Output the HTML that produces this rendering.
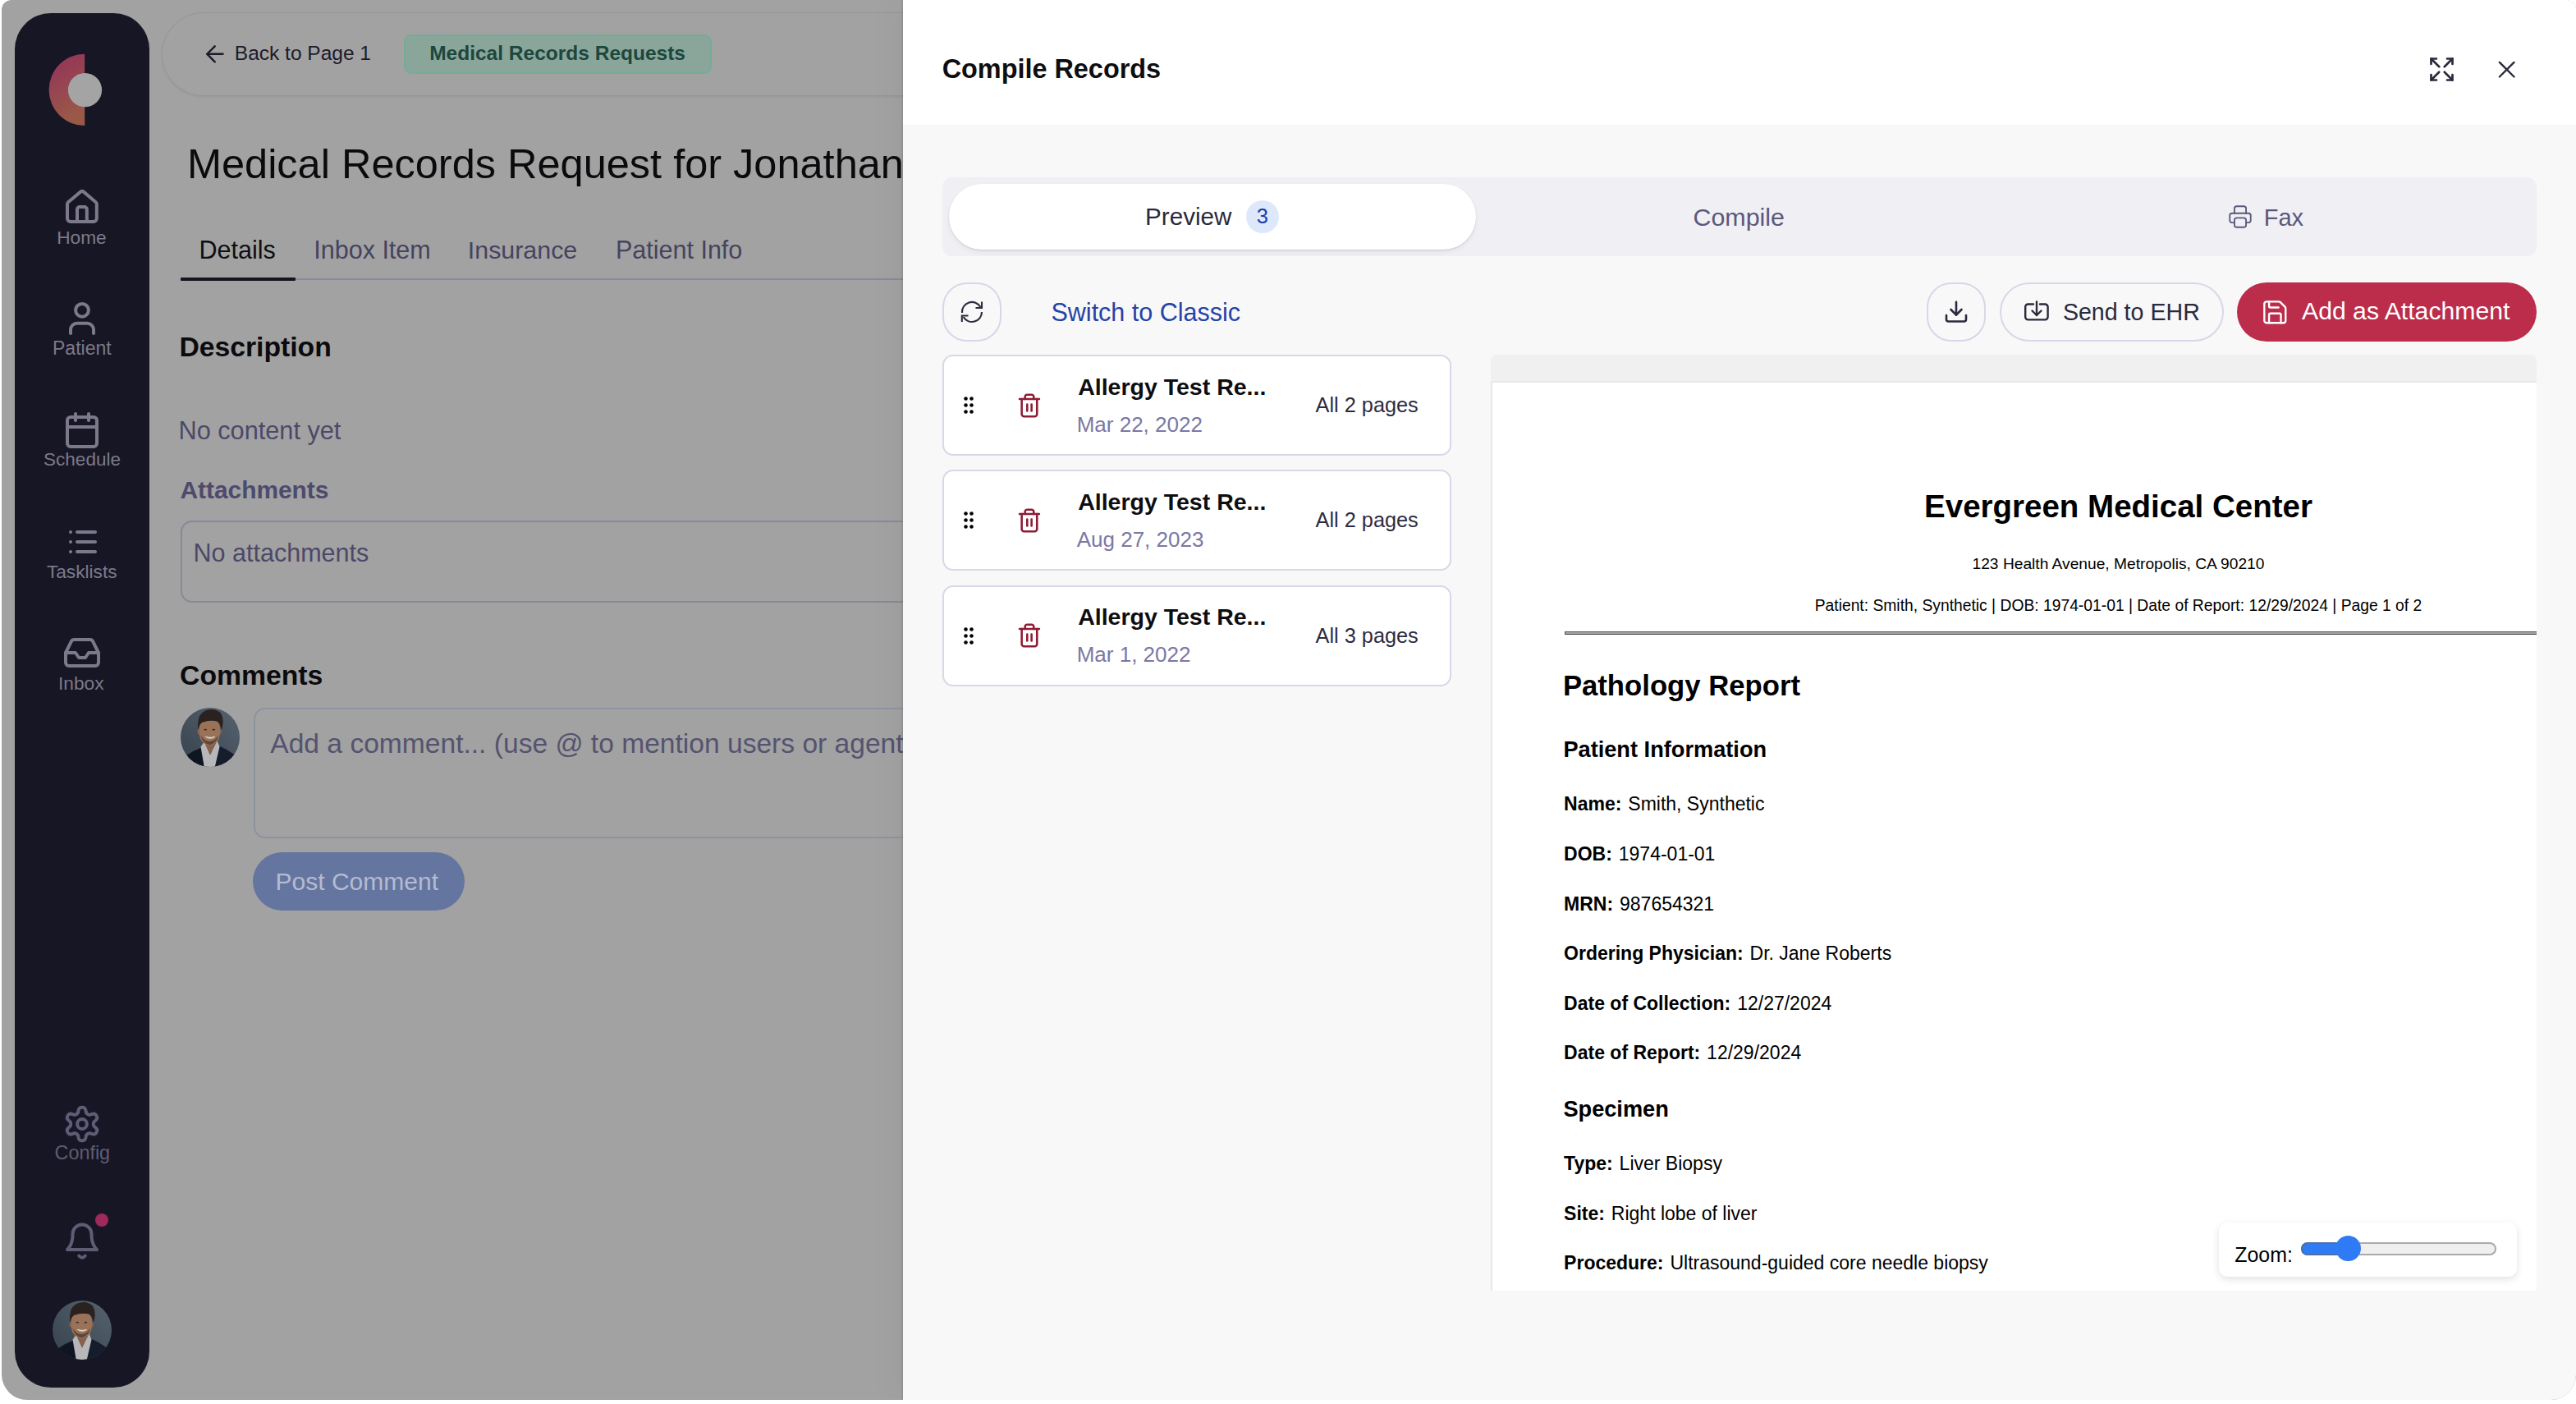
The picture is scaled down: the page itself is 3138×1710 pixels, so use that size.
<!DOCTYPE html>
<html><head><meta charset="utf-8"><style>
html,body{margin:0;padding:0;width:3138px;height:1710px;overflow:hidden;background:#fff;font-family:"Liberation Sans",sans-serif}
.win{position:absolute;left:2px;top:0;width:3136px;height:1705px;border-radius:12px 12px 31px 31px;overflow:hidden;background:#a2a2a2}
.page{position:absolute;left:-2px;top:0;width:1100px;height:1705px;overflow:hidden}
.drawer{position:absolute;left:1098px;top:0;width:2038px;height:1705px;background:#f8f8f8;box-shadow:-1px 0 2px rgba(0,0,0,0.15),-8px 0 40px rgba(0,0,0,0.04)}
.t{position:absolute;white-space:nowrap;line-height:1}
.b{position:absolute;box-sizing:border-box}
svg.b{overflow:visible}
</style></head><body>
<div class="win">
<div class="page">
<div class="b" style="left:18px;top:16px;width:164px;height:1674px;background:#171624;border-radius:44px"></div>
<svg class="b" style="left:56px;top:62px;width:96px;height:96px" viewBox="56 62 96 96"><defs><linearGradient id="lg" x1="0" y1="0" x2="0.3" y2="1"><stop offset="0" stop-color="#93305b"/><stop offset="1" stop-color="#9a5947"/></linearGradient></defs><path d="M103.2 65.8 A43.6 43.6 0 0 0 103.2 153 Z" fill="url(#lg)"/><circle cx="103.5" cy="109.6" r="20.6" fill="#a4a4a4"/></svg>
<svg class="b" style="left:70px;top:220px;width:60px;height:60px;overflow:visible" viewBox="70 220 60 60" fill="none" stroke="#7c798b" stroke-width="4" stroke-linecap="round" stroke-linejoin="round"><path d="M82 248.5 a3 3 0 0 1 1.1 -2.3 L98.1 233.6 a3 3 0 0 1 3.8 0 L116.7 246.2 a3 3 0 0 1 1.1 2.3 V266 a4 4 0 0 1 -4 4 H86 a4 4 0 0 1 -4 -4 Z"/><path d="M94 270 V255 a3 3 0 0 1 3 -3 H102.8 a3 3 0 0 1 3 3 V270"/></svg>
<div class="t " style="left:69.2px;top:277.8px;font-size:22.7px;font-weight:400;color:#7c798b;">Home</div>
<svg class="b" style="left:70px;top:355px;width:60px;height:60px;overflow:visible" viewBox="70 355 60 60" fill="none" stroke="#7c798b" stroke-width="4" stroke-linecap="round" stroke-linejoin="round"><circle cx="100" cy="377.8" r="7.9"/><path d="M86 406 V401.5 A7.7 7.7 0 0 1 93.7 393.8 H106.3 A7.7 7.7 0 0 1 114 401.5 V406"/></svg>
<div class="t " style="left:64.0px;top:412.8px;font-size:23px;font-weight:400;color:#7c798b;">Patient</div>
<svg class="b" style="left:76px;top:500px;width:48px;height:48px;" viewBox="0 0 24 24" fill="none" stroke="#7c798b" stroke-width="2" stroke-linecap="round" stroke-linejoin="round"><path d="M8 2v4"/><path d="M16 2v4"/><rect width="18" height="18" x="3" y="4" rx="2"/><path d="M3 10h18"/></svg>
<div class="t " style="left:53.1px;top:549.0px;font-size:22.5px;font-weight:400;color:#7c798b;">Schedule</div>
<svg class="b" style="left:76px;top:636px;width:48px;height:48px;" viewBox="0 0 24 24" fill="none" stroke="#7c798b" stroke-width="2" stroke-linecap="round" stroke-linejoin="round"><path d="M9 6h11"/><path d="M9 12h11"/><path d="M9 18h11"/><path d="M5 6v.01"/><path d="M5 12v.01"/><path d="M5 18v.01"/></svg>
<div class="t " style="left:56.9px;top:684.6px;font-size:22.7px;font-weight:400;color:#7c798b;">Tasklists</div>
<svg class="b" style="left:76px;top:771px;width:48px;height:48px;" viewBox="0 0 24 24" fill="none" stroke="#7c798b" stroke-width="2" stroke-linecap="round" stroke-linejoin="round"><polyline points="22 12 16 12 14 15 10 15 8 12 2 12"/><path d="M5.45 5.11 2 12v6a2 2 0 0 0 2 2h16a2 2 0 0 0 2-2v-6l-3.45-6.89A2 2 0 0 0 16.76 4H7.24a2 2 0 0 0-1.79 1.11z"/></svg>
<div class="t " style="left:71.0px;top:820.8px;font-size:22.7px;font-weight:400;color:#7c798b;">Inbox</div>
<svg class="b" style="left:70px;top:1338px;width:60px;height:60px;overflow:visible" viewBox="70 1338 60 60" fill="none" stroke="#5f5c75" stroke-width="4" stroke-linecap="round" stroke-linejoin="round"><path d="M113.80 1369.00 L113.80 1369.24 L113.81 1369.48 L113.83 1369.72 L113.85 1369.97 L113.88 1370.21 L113.94 1370.46 L114.01 1370.72 L114.12 1370.98 L114.27 1371.26 L114.47 1371.55 L114.74 1371.86 L115.07 1372.20 L115.48 1372.57 L115.94 1372.97 L116.42 1373.40 L116.89 1373.84 L117.32 1374.30 L117.68 1374.74 L117.95 1375.18 L118.14 1375.60 L118.25 1376.01 L118.30 1376.40 L118.30 1376.77 L118.26 1377.13 L118.18 1377.48 L118.08 1377.82 L117.96 1378.15 L117.82 1378.47 L117.66 1378.79 L117.49 1379.10 L117.31 1379.40 L117.11 1379.69 L116.90 1379.98 L116.68 1380.25 L116.43 1380.51 L116.17 1380.75 L115.88 1380.97 L115.56 1381.15 L115.20 1381.31 L114.79 1381.41 L114.33 1381.46 L113.81 1381.44 L113.25 1381.35 L112.64 1381.21 L112.02 1381.02 L111.41 1380.81 L110.83 1380.62 L110.31 1380.45 L109.85 1380.33 L109.45 1380.26 L109.09 1380.23 L108.78 1380.24 L108.50 1380.27 L108.24 1380.34 L107.99 1380.42 L107.76 1380.51 L107.54 1380.61 L107.32 1380.72 L107.11 1380.83 L106.90 1380.95 L106.69 1381.07 L106.49 1381.20 L106.29 1381.34 L106.09 1381.48 L105.89 1381.63 L105.70 1381.80 L105.52 1382.00 L105.34 1382.22 L105.18 1382.49 L105.03 1382.81 L104.89 1383.20 L104.76 1383.66 L104.64 1384.19 L104.53 1384.79 L104.40 1385.42 L104.25 1386.05 L104.07 1386.65 L103.86 1387.18 L103.62 1387.64 L103.35 1388.01 L103.06 1388.31 L102.75 1388.55 L102.42 1388.73 L102.09 1388.88 L101.75 1388.99 L101.40 1389.07 L101.05 1389.13 L100.70 1389.17 L100.35 1389.19 L100.00 1389.20 L99.65 1389.19 L99.30 1389.17 L98.95 1389.13 L98.60 1389.07 L98.25 1388.99 L97.91 1388.88 L97.58 1388.73 L97.25 1388.55 L96.94 1388.31 L96.65 1388.01 L96.38 1387.64 L96.14 1387.18 L95.93 1386.65 L95.75 1386.05 L95.60 1385.42 L95.47 1384.79 L95.36 1384.19 L95.24 1383.66 L95.11 1383.20 L94.97 1382.81 L94.82 1382.49 L94.66 1382.22 L94.48 1382.00 L94.30 1381.80 L94.11 1381.63 L93.91 1381.48 L93.71 1381.34 L93.51 1381.20 L93.31 1381.07 L93.10 1380.95 L92.89 1380.83 L92.68 1380.72 L92.46 1380.61 L92.24 1380.51 L92.01 1380.42 L91.76 1380.34 L91.50 1380.27 L91.22 1380.24 L90.91 1380.23 L90.55 1380.26 L90.15 1380.33 L89.69 1380.45 L89.17 1380.62 L88.59 1380.81 L87.98 1381.02 L87.36 1381.21 L86.75 1381.35 L86.19 1381.44 L85.67 1381.46 L85.21 1381.41 L84.80 1381.31 L84.44 1381.15 L84.12 1380.97 L83.83 1380.75 L83.57 1380.51 L83.32 1380.25 L83.10 1379.98 L82.89 1379.69 L82.69 1379.40 L82.51 1379.10 L82.34 1378.79 L82.18 1378.47 L82.04 1378.15 L81.92 1377.82 L81.82 1377.48 L81.74 1377.13 L81.70 1376.77 L81.70 1376.40 L81.75 1376.01 L81.86 1375.60 L82.05 1375.18 L82.32 1374.74 L82.68 1374.30 L83.11 1373.84 L83.58 1373.40 L84.06 1372.97 L84.52 1372.57 L84.93 1372.20 L85.26 1371.86 L85.53 1371.55 L85.73 1371.26 L85.88 1370.98 L85.99 1370.72 L86.06 1370.46 L86.12 1370.21 L86.15 1369.97 L86.17 1369.72 L86.19 1369.48 L86.20 1369.24 L86.20 1369.00 L86.20 1368.76 L86.19 1368.52 L86.17 1368.28 L86.15 1368.03 L86.12 1367.79 L86.06 1367.54 L85.99 1367.28 L85.88 1367.02 L85.73 1366.74 L85.53 1366.45 L85.26 1366.14 L84.93 1365.80 L84.52 1365.43 L84.06 1365.03 L83.58 1364.60 L83.11 1364.16 L82.68 1363.70 L82.32 1363.26 L82.05 1362.82 L81.86 1362.40 L81.75 1361.99 L81.70 1361.60 L81.70 1361.23 L81.74 1360.87 L81.82 1360.52 L81.92 1360.18 L82.04 1359.85 L82.18 1359.53 L82.34 1359.21 L82.51 1358.90 L82.69 1358.60 L82.89 1358.31 L83.10 1358.02 L83.32 1357.75 L83.57 1357.49 L83.83 1357.25 L84.12 1357.03 L84.44 1356.85 L84.80 1356.69 L85.21 1356.59 L85.67 1356.54 L86.19 1356.56 L86.75 1356.65 L87.36 1356.79 L87.98 1356.98 L88.59 1357.19 L89.17 1357.38 L89.69 1357.55 L90.15 1357.67 L90.55 1357.74 L90.91 1357.77 L91.22 1357.76 L91.50 1357.73 L91.76 1357.66 L92.01 1357.58 L92.24 1357.49 L92.46 1357.39 L92.68 1357.28 L92.89 1357.17 L93.10 1357.05 L93.31 1356.93 L93.51 1356.80 L93.71 1356.66 L93.91 1356.52 L94.11 1356.37 L94.30 1356.20 L94.48 1356.00 L94.66 1355.78 L94.82 1355.51 L94.97 1355.19 L95.11 1354.80 L95.24 1354.34 L95.36 1353.81 L95.47 1353.21 L95.60 1352.58 L95.75 1351.95 L95.93 1351.35 L96.14 1350.82 L96.38 1350.36 L96.65 1349.99 L96.94 1349.69 L97.25 1349.45 L97.58 1349.27 L97.91 1349.12 L98.25 1349.01 L98.60 1348.93 L98.95 1348.87 L99.30 1348.83 L99.65 1348.81 L100.00 1348.80 L100.35 1348.81 L100.70 1348.83 L101.05 1348.87 L101.40 1348.93 L101.75 1349.01 L102.09 1349.12 L102.42 1349.27 L102.75 1349.45 L103.06 1349.69 L103.35 1349.99 L103.62 1350.36 L103.86 1350.82 L104.07 1351.35 L104.25 1351.95 L104.40 1352.58 L104.53 1353.21 L104.64 1353.81 L104.76 1354.34 L104.89 1354.80 L105.03 1355.19 L105.18 1355.51 L105.34 1355.78 L105.52 1356.00 L105.70 1356.20 L105.89 1356.37 L106.09 1356.52 L106.29 1356.66 L106.49 1356.80 L106.69 1356.93 L106.90 1357.05 L107.11 1357.17 L107.32 1357.28 L107.54 1357.39 L107.76 1357.49 L107.99 1357.58 L108.24 1357.66 L108.50 1357.73 L108.78 1357.76 L109.09 1357.77 L109.45 1357.74 L109.85 1357.67 L110.31 1357.55 L110.83 1357.38 L111.41 1357.19 L112.02 1356.98 L112.64 1356.79 L113.25 1356.65 L113.81 1356.56 L114.33 1356.54 L114.79 1356.59 L115.20 1356.69 L115.56 1356.85 L115.88 1357.03 L116.17 1357.25 L116.43 1357.49 L116.68 1357.75 L116.90 1358.02 L117.11 1358.31 L117.31 1358.60 L117.49 1358.90 L117.66 1359.21 L117.82 1359.53 L117.96 1359.85 L118.08 1360.18 L118.18 1360.52 L118.26 1360.87 L118.30 1361.23 L118.30 1361.60 L118.25 1361.99 L118.14 1362.40 L117.95 1362.82 L117.68 1363.26 L117.32 1363.70 L116.89 1364.16 L116.42 1364.60 L115.94 1365.03 L115.48 1365.43 L115.07 1365.80 L114.74 1366.14 L114.47 1366.45 L114.27 1366.74 L114.12 1367.02 L114.01 1367.28 L113.94 1367.54 L113.88 1367.79 L113.85 1368.03 L113.83 1368.28 L113.81 1368.52 L113.80 1368.76 Z"/><circle cx="100" cy="1369" r="5.9"/></svg>
<div class="t " style="left:66.5px;top:1393.2px;font-size:23.4px;font-weight:400;color:#5f5c75;">Config</div>
<svg class="b" style="left:70px;top:1470px;width:60px;height:70px;overflow:visible" viewBox="70 1470 60 70" fill="none" stroke="#5f5c75" stroke-width="4" stroke-linecap="round" stroke-linejoin="round"><path d="M82 1522 Q88 1516 88.5 1506 V1503 A11.5 11.5 0 0 1 111.5 1503 V1506 Q112 1516 118 1522 Z"/><path d="M96.3 1529.5 Q100 1534 103.7 1529.5"/></svg>
<div class="b" style="left:115.9px;top:1477.8px;width:16.19999999999999px;height:16.200000000000045px;background:#9e2a5c;border-radius:50%"></div>
<svg class="b" style="left:64px;top:1584px;width:72px;height:72px" viewBox="0 0 100 100"><defs><clipPath id="ac1"><circle cx="50" cy="50" r="50"/></clipPath><linearGradient id="abg1" x1="0" y1="1" x2="1" y2="0"><stop offset="0" stop-color="#36424d"/><stop offset="1" stop-color="#56626d"/></linearGradient></defs><g clip-path="url(#ac1)"><rect width="100" height="100" fill="url(#abg1)"/><path d="M36 60 L64 60 L64 72 L36 72Z" fill="#7d5a48"/><path d="M8 82 Q22 72 36 67 L40 100 L0 100Z" fill="#0f1522"/><path d="M92 80 Q78 70 64 64 L58 100 L100 100Z" fill="#151c2b"/><path d="M34 66 L40 58 L50 80 L62 56 L66 66 L58 100 L40 100Z" fill="#b7b7b9"/><path d="M41 60 L50 80 L59 58 Q50 66 41 60Z" fill="#86624e"/><ellipse cx="31.5" cy="40" rx="3" ry="5" fill="#86624e"/><ellipse cx="66.5" cy="40" rx="3" ry="5" fill="#86624e"/><path d="M31.5 34 Q31.5 21 49 21 Q66.5 21 66.5 34 L66.5 45 Q65 61 49 64 Q33 61 31.5 45Z" fill="#9a7258"/><path d="M34 46 Q36 60 49 63 Q62 60 64 46 Q60 56 49 57 Q38 56 34 46Z" fill="#5d463a"/><path d="M30 38 Q26 12 42 5 Q57 -1 68 9 Q75 20 69 38 Q67 26 62 23 Q50 20 36 25 Q31 29 30 38Z" fill="#2a2220"/><ellipse cx="42" cy="37" rx="2.6" ry="1.3" fill="#3a2e2a"/><ellipse cx="56" cy="37" rx="2.6" ry="1.3" fill="#3a2e2a"/><path d="M42 49 Q50 54 58 49 Q50 52 42 49Z" fill="#d8d2cc" stroke="#d8d2cc" stroke-width="1.5"/></g></svg>
<div class="b" style="left:197px;top:15px;width:1103px;height:102px;border:1.5px solid #969696;border-right:none;border-radius:51px 0 0 51px;box-shadow:0 2px 3px rgba(0,0,0,0.05)"></div>
<svg class="b" style="left:245px;top:50px;width:32px;height:32px;overflow:visible" viewBox="245 50 32 32" fill="none" stroke="#1c1b2a" stroke-width="2.4" stroke-linecap="round" stroke-linejoin="round"><path d="M252.5 65.8 H271.5"/><path d="M261.7 56.3 L252.3 65.8 L261.7 75.3"/></svg>
<div class="t " style="left:285.8px;top:53.3px;font-size:24.5px;font-weight:400;color:#1c1b2a;">Back to Page 1</div>
<div class="b" style="left:492px;top:42px;width:375px;height:48px;background:#8aa69b;border:2px solid #74ac98;border-radius:9px;box-sizing:border-box"></div>
<div class="t " style="left:523.2px;top:53.3px;font-size:24.5px;font-weight:700;color:#1d473d;">Medical Records Requests</div>
<div class="t " style="left:227.9px;top:174.5px;font-size:50.5px;font-weight:400;color:#0b0b0e;">Medical Records Request for Jonathan Doe</div>
<div class="b" style="left:220px;top:339px;width:1080px;height:2px;background:#8b8996"></div>
<div class="b" style="left:220px;top:338px;width:140px;height:4px;background:#15141f;border-radius:1px"></div>
<div class="t " style="left:242.6px;top:288.7px;font-size:30.5px;font-weight:400;color:#0f0f14;">Details</div>
<div class="t " style="left:382.3px;top:288.7px;font-size:30.5px;font-weight:400;color:#46435f;">Inbox Item</div>
<div class="t " style="left:569.8px;top:288.8px;font-size:30.4px;font-weight:400;color:#46435f;">Insurance</div>
<div class="t " style="left:750.0px;top:288.7px;font-size:30.5px;font-weight:400;color:#46435f;">Patient Info</div>
<div class="t " style="left:218.4px;top:405.8px;font-size:33.7px;font-weight:700;color:#0b0b0e;">Description</div>
<div class="t " style="left:217.5px;top:510.0px;font-size:30.7px;font-weight:400;color:#4b4969;">No content yet</div>
<div class="t " style="left:219.4px;top:581.5px;font-size:29.9px;font-weight:700;color:#4d4a6d;">Attachments</div>
<div class="b" style="left:220px;top:634px;width:1080px;height:100px;border:2px solid #8a8898;border-radius:14px;box-sizing:border-box"></div>
<div class="t " style="left:235.6px;top:657.8px;font-size:30.5px;font-weight:400;color:#4b4969;">No attachments</div>
<div class="t " style="left:219.1px;top:805.8px;font-size:33.7px;font-weight:700;color:#0b0b0e;">Comments</div>
<svg class="b" style="left:219.7px;top:861.8px;width:72px;height:72px" viewBox="0 0 100 100"><defs><clipPath id="ac2"><circle cx="50" cy="50" r="50"/></clipPath><linearGradient id="abg2" x1="0" y1="1" x2="1" y2="0"><stop offset="0" stop-color="#36424d"/><stop offset="1" stop-color="#56626d"/></linearGradient></defs><g clip-path="url(#ac2)"><rect width="100" height="100" fill="url(#abg2)"/><path d="M36 60 L64 60 L64 72 L36 72Z" fill="#7d5a48"/><path d="M8 82 Q22 72 36 67 L40 100 L0 100Z" fill="#0f1522"/><path d="M92 80 Q78 70 64 64 L58 100 L100 100Z" fill="#151c2b"/><path d="M34 66 L40 58 L50 80 L62 56 L66 66 L58 100 L40 100Z" fill="#b7b7b9"/><path d="M41 60 L50 80 L59 58 Q50 66 41 60Z" fill="#86624e"/><ellipse cx="31.5" cy="40" rx="3" ry="5" fill="#86624e"/><ellipse cx="66.5" cy="40" rx="3" ry="5" fill="#86624e"/><path d="M31.5 34 Q31.5 21 49 21 Q66.5 21 66.5 34 L66.5 45 Q65 61 49 64 Q33 61 31.5 45Z" fill="#9a7258"/><path d="M34 46 Q36 60 49 63 Q62 60 64 46 Q60 56 49 57 Q38 56 34 46Z" fill="#5d463a"/><path d="M30 38 Q26 12 42 5 Q57 -1 68 9 Q75 20 69 38 Q67 26 62 23 Q50 20 36 25 Q31 29 30 38Z" fill="#2a2220"/><ellipse cx="42" cy="37" rx="2.6" ry="1.3" fill="#3a2e2a"/><ellipse cx="56" cy="37" rx="2.6" ry="1.3" fill="#3a2e2a"/><path d="M42 49 Q50 54 58 49 Q50 52 42 49Z" fill="#d8d2cc" stroke="#d8d2cc" stroke-width="1.5"/></g></svg>
<div class="b" style="left:308.6px;top:862px;width:991.4px;height:159px;border:2px solid #8e93a2;border-radius:14px;box-sizing:border-box"></div>
<div class="t " style="left:329.3px;top:889.1px;font-size:33.6px;font-weight:400;color:#55536f;">Add a comment... (use @ to mention users or agents)</div>
<div class="b" style="left:308px;top:1038px;width:258px;height:71px;background:#6475a0;border-radius:36px"></div>
<div class="t " style="left:335.6px;top:1059.2px;font-size:30px;font-weight:400;color:#b5bbd0;">Post Comment</div>

</div>
<div class="drawer">
<div class="b" style="left:0px;top:0px;width:2038px;height:152px;background:#fff"></div>
<div class="t " style="left:47.7px;top:67.6px;font-size:32.4px;font-weight:700;color:#0e0e11;">Compile Records</div>
<svg class="b" style="left:1854.5px;top:64.8px;width:39.0px;height:39.0px;" viewBox="0 0 24 24" fill="none" stroke="#2a2a3c" stroke-width="1.65" stroke-linecap="round" stroke-linejoin="round"><path d="M16 4h4v4"/><path d="M14 10l6 -6"/><path d="M8 20h-4v-4"/><path d="M4 20l6 -6"/><path d="M16 20h4v-4"/><path d="M14 14l6 6"/><path d="M8 4h-4v4"/><path d="M4 4l6 6"/></svg>
<svg class="b" style="left:1936px;top:66.8px;width:35.40000000000009px;height:35.400000000000006px;" viewBox="0 0 24 24" fill="none" stroke="#2a2a3c" stroke-width="1.56" stroke-linecap="round" stroke-linejoin="round"><path d="M18 6l-12 12"/><path d="M6 6l12 12"/></svg>
<div class="b" style="left:47.5px;top:216px;width:1942.0px;height:95.5px;background:#efeff4;border-radius:12px"></div>
<div class="b" style="left:56px;top:223.5px;width:642px;height:80.0px;background:#fff;border-radius:40px;box-shadow:0 1px 2px rgba(0,0,0,0.10),0 3px 6px rgba(0,0,0,0.06)"></div>
<div class="t " style="left:295.1px;top:248.9px;font-size:29.6px;font-weight:400;color:#2a2a3c;">Preview</div>
<div class="b" style="left:417.79999999999995px;top:244px;width:40.0px;height:40px;background:#dde9fa;border-radius:50%"></div>
<div class="t" style="left:-562.2px;width:2000px;text-align:center;top:251.1px;font-size:25.5px;font-weight:400;color:#1e3fa8;">3</div>
<div class="t " style="left:962.5px;top:249.3px;font-size:30.4px;font-weight:400;color:#5b587a;">Compile</div>
<svg class="b" style="left:1612px;top:246.6px;width:34px;height:34.00000000000003px;" viewBox="0 0 24 24" fill="none" stroke="#5b587a" stroke-width="1.3" stroke-linecap="round" stroke-linejoin="round"><path d="M17 17h2a2 2 0 0 0 2 -2v-4a2 2 0 0 0 -2 -2h-14a2 2 0 0 0 -2 2v4a2 2 0 0 0 2 2h2"/><path d="M17 9v-4a2 2 0 0 0 -2 -2h-6a2 2 0 0 0 -2 2v4"/><path d="M7 15a2 2 0 0 1 2 -2h6a2 2 0 0 1 2 2v4a2 2 0 0 1 -2 2h-6a2 2 0 0 1 -2 -2z"/></svg>
<div class="t " style="left:1657.7px;top:250.5px;font-size:29px;font-weight:400;color:#5b587a;">Fax</div>
<div class="b" style="left:48px;top:344px;width:72px;height:72px;border:2px solid #d9d7e7;border-radius:30px;box-sizing:border-box"></div>
<svg class="b" style="left:60px;top:356px;width:48px;height:48px;overflow:visible" viewBox="1160 356 48 48" fill="none" stroke="#2a2a3c" stroke-width="2.1" stroke-linecap="butt" stroke-linejoin="miter"><path d="M1172 381 A12 12 0 0 1 1194.4 374"/><path d="M1196 367.5 V375 H1188.5"/><path d="M1196 380 A12 12 0 0 1 1173.6 386"/><path d="M1171.8 392 V384.5 H1179.5"/></svg>
<div class="t " style="left:180.5px;top:364.9px;font-size:30.5px;font-weight:400;color:#2443a6;">Switch to Classic</div>
<div class="b" style="left:1247px;top:344px;width:72px;height:72px;border:2px solid #d9d7e7;border-radius:30px;box-sizing:border-box"></div>
<svg class="b" style="left:1256px;top:356px;width:54px;height:48px;overflow:visible" viewBox="2356 356 54 48" fill="none" stroke="#2a2a3c" stroke-width="2.6" stroke-linecap="round" stroke-linejoin="round"><path d="M2371 384 V389 a2.5 2.5 0 0 0 2.5 2.5 H2392.5 a2.5 2.5 0 0 0 2.5 -2.5 V384"/><path d="M2383 367.8 V383.5"/><path d="M2376.5 377 L2383 383.5 L2389.5 377"/></svg>
<div class="b" style="left:1335.5px;top:344px;width:273.5px;height:72px;border:2px solid #d9d7e7;border-radius:36px;box-sizing:border-box"></div>
<svg class="b" style="left:1356px;top:356px;width:50px;height:44px;overflow:visible" viewBox="2456 356 50 44" fill="none" stroke="#2a2a3c" stroke-width="2.4" stroke-linecap="round" stroke-linejoin="round"><path d="M2477 370.5 H2470.5 a3.3 3.3 0 0 0 -3.3 3.3 V386.1 a3.3 3.3 0 0 0 3.3 3.3 H2491.3 a3.3 3.3 0 0 0 3.3 -3.3 V373.8 a3.3 3.3 0 0 0 -3.3 -3.3 H2485"/><path d="M2481 367.5 V384"/><path d="M2475.5 378.5 L2481 384 L2486.5 378.5"/></svg>
<div class="t " style="left:1412.9px;top:365.9px;font-size:28.6px;font-weight:400;color:#2a2a3c;">Send to EHR</div>
<div class="b" style="left:1625px;top:344px;width:364.5px;height:72px;background:#bb2d4b;border-radius:36px"></div>
<svg class="b" style="left:1653.6999999999998px;top:362.5px;width:34.600000000000364px;height:34.60000000000002px;" viewBox="0 0 24 24" fill="none" stroke="#fff" stroke-width="1.65" stroke-linecap="round" stroke-linejoin="round"><path d="M15.2 3a2 2 0 0 1 1.4.6l3.8 3.8a2 2 0 0 1 .6 1.4V19a2 2 0 0 1-2 2H5a2 2 0 0 1-2-2V5a2 2 0 0 1 2-2z"/><path d="M17 21v-7a1 1 0 0 0-1-1H8a1 1 0 0 0-1 1v7"/><path d="M7 3v4a1 1 0 0 0 1 1h7"/></svg>
<div class="t " style="left:1704.0px;top:364.4px;font-size:30.2px;font-weight:400;color:#fff;">Add as Attachment</div>
<div class="b" style="left:48px;top:432px;width:620px;height:123px;background:#fff;border:2px solid #d9d7e8;border-radius:13px;box-sizing:border-box"></div>
<svg class="b" style="left:70px;top:477px;width:20px;height:32px" viewBox="1170 477 20 32"><circle cx="1176.5" cy="485.5" r="2.3" fill="#000"/><circle cx="1176.5" cy="493.5" r="2.3" fill="#000"/><circle cx="1176.5" cy="501.5" r="2.3" fill="#000"/><circle cx="1183.5" cy="485.5" r="2.3" fill="#000"/><circle cx="1183.5" cy="493.5" r="2.3" fill="#000"/><circle cx="1183.5" cy="501.5" r="2.3" fill="#000"/></svg>
<svg class="b" style="left:138.29999999999995px;top:477.6px;width:31.90000000000009px;height:31.899999999999977px;" viewBox="0 0 24 24" fill="none" stroke="#8f1c35" stroke-width="1.93" stroke-linecap="round" stroke-linejoin="round"><path d="M3 6h18"/><path d="M19 6v14c0 1-1 2-2 2H7c-1 0-2-1-2-2V6"/><path d="M8 6V4c0-1 1-2 2-2h4c1 0 2 1 2 2v2"/><line x1="10" x2="10" y1="11" y2="17"/><line x1="14" x2="14" y1="11" y2="17"/></svg>
<div class="t " style="left:213.2px;top:456.5px;font-size:28.5px;font-weight:700;color:#0e0e11;">Allergy Test Re...</div>
<div class="t " style="left:211.7px;top:503.7px;font-size:26px;font-weight:400;color:#7b78a4;">Mar 22, 2022</div>
<div class="t " style="left:502.6px;top:481.3px;font-size:25.3px;font-weight:400;color:#2d2c3f;">All 2 pages</div>
<div class="b" style="left:48px;top:572px;width:620px;height:123px;background:#fff;border:2px solid #d9d7e8;border-radius:13px;box-sizing:border-box"></div>
<svg class="b" style="left:70px;top:617px;width:20px;height:32px" viewBox="1170 617 20 32"><circle cx="1176.5" cy="625.5" r="2.3" fill="#000"/><circle cx="1176.5" cy="633.5" r="2.3" fill="#000"/><circle cx="1176.5" cy="641.5" r="2.3" fill="#000"/><circle cx="1183.5" cy="625.5" r="2.3" fill="#000"/><circle cx="1183.5" cy="633.5" r="2.3" fill="#000"/><circle cx="1183.5" cy="641.5" r="2.3" fill="#000"/></svg>
<svg class="b" style="left:138.29999999999995px;top:617.6px;width:31.90000000000009px;height:31.899999999999977px;" viewBox="0 0 24 24" fill="none" stroke="#8f1c35" stroke-width="1.93" stroke-linecap="round" stroke-linejoin="round"><path d="M3 6h18"/><path d="M19 6v14c0 1-1 2-2 2H7c-1 0-2-1-2-2V6"/><path d="M8 6V4c0-1 1-2 2-2h4c1 0 2 1 2 2v2"/><line x1="10" x2="10" y1="11" y2="17"/><line x1="14" x2="14" y1="11" y2="17"/></svg>
<div class="t " style="left:213.2px;top:596.5px;font-size:28.5px;font-weight:700;color:#0e0e11;">Allergy Test Re...</div>
<div class="t " style="left:211.7px;top:643.7px;font-size:26px;font-weight:400;color:#7b78a4;">Aug 27, 2023</div>
<div class="t " style="left:502.6px;top:621.3px;font-size:25.3px;font-weight:400;color:#2d2c3f;">All 2 pages</div>
<div class="b" style="left:48px;top:712.5px;width:620px;height:123.0px;background:#fff;border:2px solid #d9d7e8;border-radius:13px;box-sizing:border-box"></div>
<svg class="b" style="left:70px;top:757.5px;width:20px;height:32px" viewBox="1170 757.5 20 32"><circle cx="1176.5" cy="766.0" r="2.3" fill="#000"/><circle cx="1176.5" cy="774.0" r="2.3" fill="#000"/><circle cx="1176.5" cy="782.0" r="2.3" fill="#000"/><circle cx="1183.5" cy="766.0" r="2.3" fill="#000"/><circle cx="1183.5" cy="774.0" r="2.3" fill="#000"/><circle cx="1183.5" cy="782.0" r="2.3" fill="#000"/></svg>
<svg class="b" style="left:138.29999999999995px;top:758.1px;width:31.90000000000009px;height:31.899999999999977px;" viewBox="0 0 24 24" fill="none" stroke="#8f1c35" stroke-width="1.93" stroke-linecap="round" stroke-linejoin="round"><path d="M3 6h18"/><path d="M19 6v14c0 1-1 2-2 2H7c-1 0-2-1-2-2V6"/><path d="M8 6V4c0-1 1-2 2-2h4c1 0 2 1 2 2v2"/><line x1="10" x2="10" y1="11" y2="17"/><line x1="14" x2="14" y1="11" y2="17"/></svg>
<div class="t " style="left:213.2px;top:737.0px;font-size:28.5px;font-weight:700;color:#0e0e11;">Allergy Test Re...</div>
<div class="t " style="left:211.7px;top:784.2px;font-size:26px;font-weight:400;color:#7b78a4;">Mar 1, 2022</div>
<div class="t " style="left:502.6px;top:761.8px;font-size:25.3px;font-weight:400;color:#2d2c3f;">All 3 pages</div>
<div class="b" style="left:716px;top:432px;width:1274px;height:1140px;background:#f0f0f0;border-radius:8px 8px 0 0;overflow:hidden"></div>
<div class="b" style="left:716px;top:464px;width:1274px;height:2px;background:#e8e8e8"></div>
<div class="b" style="left:716px;top:466px;width:2px;height:1106px;background:#e8e8e8"></div>
<div class="b" style="left:718px;top:466px;width:1272px;height:1106px;background:#fff;overflow:hidden"><div class="t" style="left:-237.5px;width:2000px;text-align:center;top:131.8px;font-size:38.5px;font-weight:700;color:#000;">Evergreen Medical Center</div>
<div class="t" style="left:-237.5px;width:2000px;text-align:center;top:210.8px;font-size:19.2px;font-weight:400;color:#000;">123 Health Avenue, Metropolis, CA 90210</div>
<div class="t" style="left:-237.5px;width:2000px;text-align:center;top:262.4px;font-size:19.3px;font-weight:400;color:#000;">Patient: Smith, Synthetic | DOB: 1974-01-01 | Date of Report: 12/29/2024 | Page 1 of 2</div>
<div class="b" style="left:87.5px;top:303px;width:1294.5px;height:4px;background:#a5a5a5;border-top:1px solid #5a5a5a;border-bottom:1px solid #454545;border-left:1px solid #555"></div>
<div class="t " style="left:85.9px;top:351.9px;font-size:34.7px;font-weight:700;color:#000;">Pathology Report</div>
<div class="t " style="left:86.4px;top:432.5px;font-size:27.2px;font-weight:700;color:#000;">Patient Information</div>
<div class="t " style="left:87.1px;top:502.2px;font-size:23px;font-weight:400;color:#000;"><b>Name:</b><span style='margin-left:1.5px'> Smith, Synthetic</span></div>
<div class="t " style="left:87.1px;top:563.0px;font-size:23px;font-weight:400;color:#000;"><b>DOB:</b><span style='margin-left:1.5px'> 1974-01-01</span></div>
<div class="t " style="left:87.1px;top:623.5px;font-size:23px;font-weight:400;color:#000;"><b>MRN:</b><span style='margin-left:1.5px'> 987654321</span></div>
<div class="t " style="left:87.1px;top:684.0px;font-size:23px;font-weight:400;color:#000;"><b>Ordering Physician:</b><span style='margin-left:1.5px'> Dr. Jane Roberts</span></div>
<div class="t " style="left:87.1px;top:744.5px;font-size:23px;font-weight:400;color:#000;"><b>Date of Collection:</b><span style='margin-left:1.5px'> 12/27/2024</span></div>
<div class="t " style="left:87.1px;top:805.2px;font-size:23px;font-weight:400;color:#000;"><b>Date of Report:</b><span style='margin-left:1.5px'> 12/29/2024</span></div>
<div class="t " style="left:86.4px;top:871.0px;font-size:27.2px;font-weight:700;color:#000;">Specimen</div>
<div class="t " style="left:87.1px;top:940.3px;font-size:23px;font-weight:400;color:#000;"><b>Type:</b><span style='margin-left:1.5px'> Liver Biopsy</span></div>
<div class="t " style="left:87.1px;top:1001.2px;font-size:23px;font-weight:400;color:#000;"><b>Site:</b><span style='margin-left:1.5px'> Right lobe of liver</span></div>
<div class="t " style="left:87.1px;top:1061.2px;font-size:23px;font-weight:400;color:#000;"><b>Procedure:</b><span style='margin-left:1.5px'> Ultrasound-guided core needle biopsy</span></div>
</div>
<div class="b" style="left:1602.5px;top:1489px;width:363.5px;height:66px;background:#fff;border-radius:10px;box-shadow:0 3px 10px rgba(0,0,0,0.12)"></div>
<div class="t " style="left:1622.3px;top:1515.9px;font-size:24.9px;font-weight:400;color:#000;">Zoom:</div>
<div class="b" style="left:1702.5px;top:1512.8px;width:238.0px;height:16.0px;background:#efefef;border:2px solid #aaaaaa;border-radius:9px;box-sizing:border-box"></div>
<div class="b" style="left:1702.5px;top:1512.8px;width:59.5px;height:16.0px;background:#2f7bf5;border:2px solid #4b70aa;border-right:none;border-radius:9px 0 0 9px;box-sizing:border-box"></div>
<div class="b" style="left:1744.9px;top:1505.2px;width:31.199999999999818px;height:31.200000000000045px;background:#2f7bf5;border-radius:50%"></div>

</div>
</div>
</body></html>
